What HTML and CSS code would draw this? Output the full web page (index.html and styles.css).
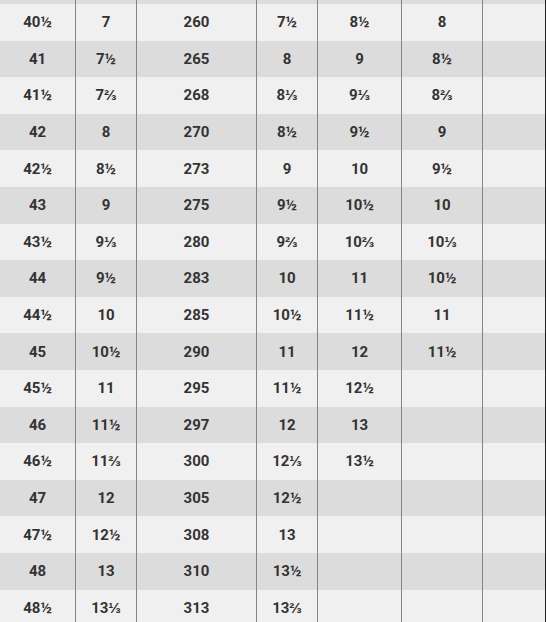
FILE: index.html
```html
<!DOCTYPE html>
<html>
<head>
<meta charset="utf-8">
<link rel="stylesheet" href="styles.css">
</head>
<body>
<div class="table">
  <div class="row top"><div></div><div></div><div></div><div></div><div></div><div></div><div></div></div>
  <div class="row"><div>40½</div><div>7</div><div>260</div><div>7½</div><div>8½</div><div>8</div><div></div></div>
  <div class="row"><div>41</div><div>7½</div><div>265</div><div>8</div><div>9</div><div>8½</div><div></div></div>
  <div class="row"><div>41½</div><div>7⅔</div><div>268</div><div>8⅓</div><div>9⅓</div><div>8⅔</div><div></div></div>
  <div class="row"><div>42</div><div>8</div><div>270</div><div>8½</div><div>9½</div><div>9</div><div></div></div>
  <div class="row"><div>42½</div><div>8½</div><div>273</div><div>9</div><div>10</div><div>9½</div><div></div></div>
  <div class="row"><div>43</div><div>9</div><div>275</div><div>9½</div><div>10½</div><div>10</div><div></div></div>
  <div class="row"><div>43½</div><div>9⅓</div><div>280</div><div>9⅔</div><div>10⅔</div><div>10⅓</div><div></div></div>
  <div class="row"><div>44</div><div>9½</div><div>283</div><div>10</div><div>11</div><div>10½</div><div></div></div>
  <div class="row"><div>44½</div><div>10</div><div>285</div><div>10½</div><div>11½</div><div>11</div><div></div></div>
  <div class="row"><div>45</div><div>10½</div><div>290</div><div>11</div><div>12</div><div>11½</div><div></div></div>
  <div class="row"><div>45½</div><div>11</div><div>295</div><div>11½</div><div>12½</div><div></div><div></div></div>
  <div class="row"><div>46</div><div>11½</div><div>297</div><div>12</div><div>13</div><div></div><div></div></div>
  <div class="row"><div>46½</div><div>11⅔</div><div>300</div><div>12⅓</div><div>13½</div><div></div><div></div></div>
  <div class="row"><div>47</div><div>12</div><div>305</div><div>12½</div><div></div><div></div><div></div></div>
  <div class="row"><div>47½</div><div>12½</div><div>308</div><div>13</div><div></div><div></div><div></div></div>
  <div class="row"><div>48</div><div>13</div><div>310</div><div>13½</div><div></div><div></div><div></div></div>
  <div class="row"><div>48½</div><div>13⅓</div><div>313</div><div>13⅔</div><div></div><div></div><div></div></div>
</div>
</body>
</html>
```

FILE: styles.css
```css
html, body {
  margin: 0;
  padding: 0;
  background: #f0f0f0;
  overflow: hidden;
}
.table {
  width: 546px;
  font-family: Roboto, "Liberation Sans", sans-serif;
  font-weight: 700;
  font-size: 15px;
  color: #333;
}
.row {
  display: grid;
  grid-template-columns: 76px 61px 120px 61px 84px 81px 63px;
  height: 36.6px;
}
.row:nth-child(odd) {
  background: #dcdcdc;
}
.row:nth-child(even) {
  background: #f0f0f0;
}
.row.top {
  height: 4px;
}
.row > div {
  box-sizing: border-box;
  border-right: 1px solid #858585;
  display: flex;
  align-items: center;
  justify-content: center;
}
.row > div:last-child {
  border-right-color: #222;
}
```
